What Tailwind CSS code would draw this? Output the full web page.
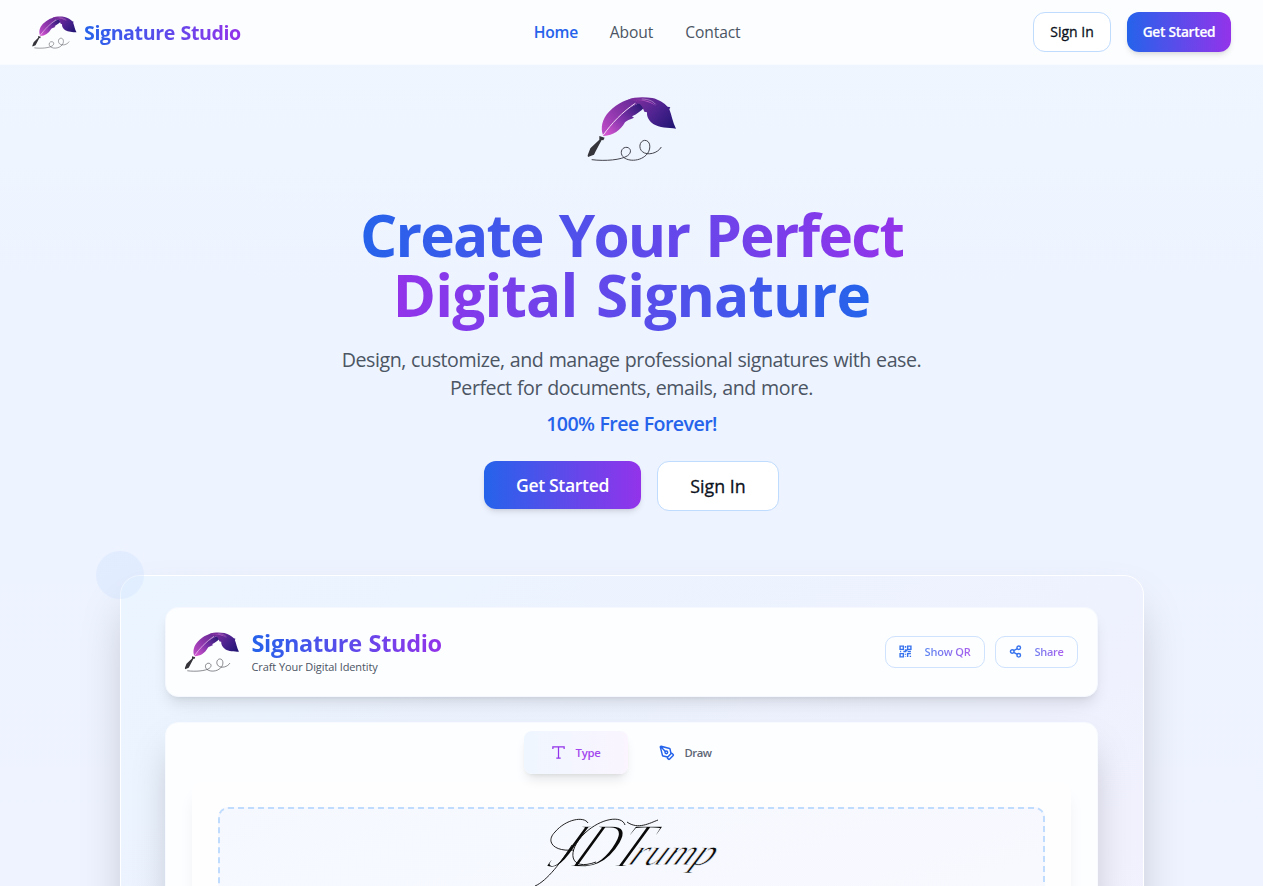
<!DOCTYPE html>
<html lang="en">
<head>
<meta charset="utf-8">
<title>Signature Studio</title>
<script src="https://cdn.jsdelivr.net/npm/@tailwindcss/browser@4"></script>
</head>
<body class="h-[886px] overflow-hidden bg-linear-to-b from-[#eff6ff] via-[#edf3ff] to-[#eef3ff] font-['Open_Sans','Noto_Sans',sans-serif]">

<!-- Shared symbols -->
<svg class="absolute size-0">
  <defs>
    <linearGradient id="vane" gradientUnits="userSpaceOnUse" x1="100" y1="150" x2="225" y2="50"><stop offset="0" stop-color="#bf4cc8"/><stop offset=".45" stop-color="#8c36ab"/><stop offset="1" stop-color="#5a2590"/></linearGradient>
    <linearGradient id="under" gradientUnits="userSpaceOnUse" x1="115" y1="155" x2="215" y2="65"><stop offset="0" stop-color="#d355cf"/><stop offset=".5" stop-color="#7c31a8"/><stop offset="1" stop-color="#2f1a78"/></linearGradient>
    <linearGradient id="tip" gradientUnits="userSpaceOnUse" x1="200" y1="40" x2="305" y2="130"><stop offset="0" stop-color="#7c2d9d"/><stop offset=".5" stop-color="#4e2390"/><stop offset="1" stop-color="#231574"/></linearGradient>
  </defs>
  <symbol id="feather" viewBox="50 34 270 196">
    <path d="M98 150C90 128 95 102 116 80C143 53 172 40 205 39L212 53C177 63 137 104 98 150Z" fill="url(#vane)"/>
    <path d="M98 152C124 112 171 64 212 53L221 68C211 78 201 86 185 94L191 98C179 104 168 106 164 112C150 137 129 151 100 153Z" fill="url(#under)"/>
    <path d="M172 44C192 35 222 35 246 39C265 43 282 55 292 65L300 67L297 73C304 90 307 112 317 131C294 129 266 128 250 118C236 108 229 96 230 82L222 80L217 68C210 53 193 46 172 44Z" fill="url(#tip)"/>
    <path d="M185 47C204 42 230 47 258 63C236 45 214 40 185 47Z" fill="#b65ac4"/>
    <path d="M99 150C122 117 157 80 195 55" fill="none" stroke="#f0d8f5" stroke-width="3"/>
    <path d="M214 42C235 43 246 47 256 58" fill="none" stroke="#d9b8e5" stroke-width="1.5"/>
    <path d="M87 153L103 158L99 166L94 165L76 199L71 209L53 216L52 211L60 190L87 164Z" fill="#34343a"/>
    <path d="M64 224C105 229 153 225 172 212C184 203 183 190 170 187C156 186 149 199 155 211C166 231 212 232 232 205C243 189 240 166 223 166C207 168 204 190 216 200C232 213 262 205 273 186" fill="none" stroke="#44444c" stroke-width="3"/>
  </symbol>
</svg>

<!-- Navigation -->
<header class="flex h-[65px] items-center justify-between border-b border-[#f8fbff] bg-[#fcfdff] px-8">
  <a class="flex items-center">
    <svg class="h-[33px] w-[45px]"><use href="#feather"/></svg>
    <span class="mt-0.5 ml-[7px] w-[157px] whitespace-nowrap bg-linear-to-r/srgb from-[#2563eb] to-[#9333ea] bg-clip-text text-[19.6px] leading-7 font-bold tracking-[-0.4px] [word-spacing:1px] text-transparent">Signature Studio</span>
  </a>
  <nav class="flex items-center gap-8 whitespace-nowrap text-[15.6px] leading-6 text-[#4b5563]">
    <a class="w-[44px] font-semibold tracking-[-0.2px] text-[#2563eb]">Home</a>
    <a class="w-[43.5px] tracking-[-0.1px]">About</a>
    <a class="w-[55px] tracking-[-0.1px]">Contact</a>
  </nav>
  <div class="flex items-center gap-4">
    <a class="flex h-10 w-[78px] items-center justify-center rounded-xl border border-[#bfdbfe] bg-white text-sm font-medium whitespace-nowrap text-[#0b1120] [-webkit-text-stroke:0.3px]">Sign In</a>
    <a class="flex h-10 w-[104px] items-center justify-center rounded-xl bg-linear-to-r/srgb from-[#2563eb] to-[#9333ea] pt-px text-[13.7px] font-semibold tracking-[-0.25px] whitespace-nowrap text-white shadow-md [-webkit-text-stroke:0.2px]">Get Started</a>
  </div>
</header>

<main class="flex h-[821px] flex-col items-center overflow-hidden">
  <!-- Hero -->
  <svg class="mt-[31px] h-[66px] w-[90px] shrink-0"><use href="#feather"/></svg>
  <h1 class="mt-[42px] flex shrink-0 flex-col items-center text-[58.5px] leading-[60px] font-bold whitespace-nowrap text-transparent">
    <span class="bg-linear-to-r/srgb from-[#2563eb] to-[#9333ea] bg-clip-text tracking-[-1.8px] [word-spacing:2.5px]">Create Your Perfect</span>
    <span class="bg-linear-to-r/srgb from-[#9333ea] to-[#2563eb] bg-clip-text pb-4 tracking-[-0.85px] [word-spacing:4px]">Digital Signature</span>
  </h1>
  <p class="mt-[6px] text-center text-[19.6px] leading-7 tracking-[-0.44px] [word-spacing:0.6px] text-[#4b5563]">Design, customize, and manage professional signatures with ease.<br>Perfect for documents, emails, and more.</p>
  <p class="mt-2 text-[19.6px] leading-7 font-semibold tracking-[-0.58px] [word-spacing:0.6px] text-[#2563eb]">100% Free Forever!</p>
  <div class="mt-[23px] flex shrink-0 items-start gap-4 whitespace-nowrap">
    <a class="flex h-12 w-[157px] items-center justify-center rounded-xl bg-linear-to-r/srgb from-[#2563eb] to-[#9333ea] text-[17.6px] font-semibold tracking-[-0.35px] text-white shadow-md">Get Started</a>
    <a class="flex h-[50px] w-[122px] items-center justify-center rounded-xl border border-[#bfdbfe] bg-white text-[17.8px] font-medium text-[#0b1120] [-webkit-text-stroke:0.3px]">Sign In</a>
  </div>

  <!-- App preview -->
  <section class="relative mt-16 h-[700px] w-[1024px] shrink-0 rounded-[20px] border border-white bg-linear-to-br from-[#ebf5ff] via-[#eef2fe] to-[#f6effd] pt-[31px] pr-[45px] pl-11 shadow-2xl">
    <span class="absolute -top-[25px] -left-[25px] size-12 rounded-full bg-[#bfdbfe]/25"></span>

    <div class="flex h-[90px] items-center justify-between rounded-[13px] border border-[#f5f9ff] bg-[#fdfeff] pr-[19px] pb-px pl-[18px] shadow-lg">
      <div class="flex items-center">
        <svg class="h-[40px] w-[56px]"><use href="#feather"/></svg>
        <div class="ml-3 whitespace-nowrap">
          <div class="w-[190px] bg-linear-to-r/srgb from-[#2563eb] to-[#9333ea] bg-clip-text text-[23.5px] leading-[30px] font-bold tracking-[-0.33px] [word-spacing:1px] text-transparent">Signature Studio</div>
          <div class="text-[11px] leading-[18px] tracking-[-0.1px] text-[#4b5563]">Craft Your Digital Identity</div>
        </div>
      </div>
      <div class="flex gap-[10px] text-[11px] font-medium whitespace-nowrap">
        <a class="flex h-8 w-[100px] items-center rounded-[10px] border border-[#cfe2fe] bg-[#fdfeff] pl-[13px]">
          <svg class="size-[13px]" viewBox="0 0 24 24" fill="none" stroke="#3873ee" stroke-width="2.6"><path d="M2 2h6v6H2zM16 2h6v6h-6zM2 16h6v6H2zM12 2v3M12 8v4H8M2 12h2M16 12h6M12 16v2M12 21v1M16 22v-6h6M21 20v2M13 11l3-3"/></svg>
          <span class="mt-px ml-[13px] bg-linear-to-r/srgb from-[#3f70ee] to-[#9a43eb] bg-clip-text font-semibold tracking-[-0.15px] text-transparent opacity-85">Show QR</span>
        </a>
        <a class="flex h-8 w-[83px] items-center rounded-[10px] border border-[#cfe2fe] bg-[#fdfeff] pl-[13px]">
          <svg class="size-[13px]" viewBox="0 0 24 24" fill="none" stroke="#3873ee" stroke-width="2.6"><circle cx="18" cy="5" r="3.3"/><circle cx="6" cy="12" r="3.3"/><circle cx="18" cy="19" r="3.3"/><path d="M8.7 13.5l6.7 3.9M15.4 6.6L8.7 10.5"/></svg>
          <span class="mt-px ml-[13px] bg-linear-to-r/srgb from-[#5b67ed] to-[#9a43eb] bg-clip-text font-semibold tracking-[-0.3px] text-transparent opacity-85">Share</span>
        </a>
      </div>
    </div>

    <div class="mt-[25px] h-[600px] rounded-[13px] border border-[#f7faff] bg-[#fdfeff] px-[26px] pt-[8px] shadow-[0_21px_42px_-10px_rgba(0,0,0,0.25)]">
      <div class="flex justify-center gap-[7px] text-[11.3px] font-semibold">
        <div class="flex h-[43px] w-[104px] items-center rounded-[8px] bg-linear-to-r from-[#eff6ff] to-[#faf5ff] pl-[27px] shadow-[0_8px_12px_-3px_rgba(0,0,0,0.1),0_3px_5px_-3px_rgba(0,0,0,0.1)]">
          <svg class="size-[15px]" viewBox="0 0 24 24" fill="none" stroke="#9333ea" stroke-width="2"><path d="M3 6.5V3h18v3.500M12 3v18M8.500 21h7"/></svg>
          <span class="mt-px ml-[10px] tracking-[-0.2px] text-[#a347ee]">Type</span>
        </div>
        <div class="flex h-[43px] w-[104px] items-center pl-[24px]">
          <svg class="size-4" viewBox="0 0 24 24" fill="none" stroke="#2563eb" stroke-width="2.2" stroke-linejoin="round"><path d="M15.700 21.300a1 1 0 0 1-1.400 0l-1.600-1.600a1 1 0 0 1 0-1.400l5.600-5.600a1 1 0 0 1 1.400 0l1.600 1.600a1 1 0 0 1 0 1.400zM18 13l-1.400-6.900a1 1 0 0 0-.7-.8L3.200 2a1 1 0 0 0-1.200 1.200l3.300 12.700a1 1 0 0 0 .8.7L13 18M2.300 2.300l7.300 7.300"/><circle cx="11" cy="11" r="2"/></svg>
          <span class="mt-px ml-[10px] tracking-[-0.5px] text-[#5d6675]">Draw</span>
        </div>
      </div>
      <div class="mt-[8px] h-[500px] rounded-[10px] bg-[#fefeff] px-[26px] pt-[25px] shadow-[0_12px_18px_-4px_rgba(0,0,0,0.08)]">
        <div class="flex h-[300px] justify-center rounded-[10px] border-2 border-dashed border-[#bfdbfe] bg-linear-to-br from-[#f5f9ff] to-[#faf8ff]">
          <!-- Signature preview -->
          <svg class="h-[80px] w-[200px]" viewBox="531 810 200 80">
            <g transform="translate(533 866) skewX(-30)" font-family="'Liberation Serif',serif" font-style="italic" fill="#0a0a0a" stroke="#f7faff">
              <text x="13" y="2" font-size="63" stroke-width="1.9" textLength="92" lengthAdjust="spacingAndGlyphs">JDT</text>
              <text x="94" y="0" font-size="38" stroke-width=".8" textLength="83" lengthAdjust="spacingAndGlyphs">rump</text>
            </g>
            <path d="M572 846C562 862 547 882 535 887M574 851C554 853 545 843 555 833C566 820 584 817 588 824M596 863C569 873 566 852 585 834C601 819 622 816 625 826M627 823C638 831 650 824 658 821" fill="none" stroke="#0a0a0a" stroke-width=".9"/>
          </svg>
        </div>
      </div>
    </div>
  </section>
</main>
</body>
</html>
